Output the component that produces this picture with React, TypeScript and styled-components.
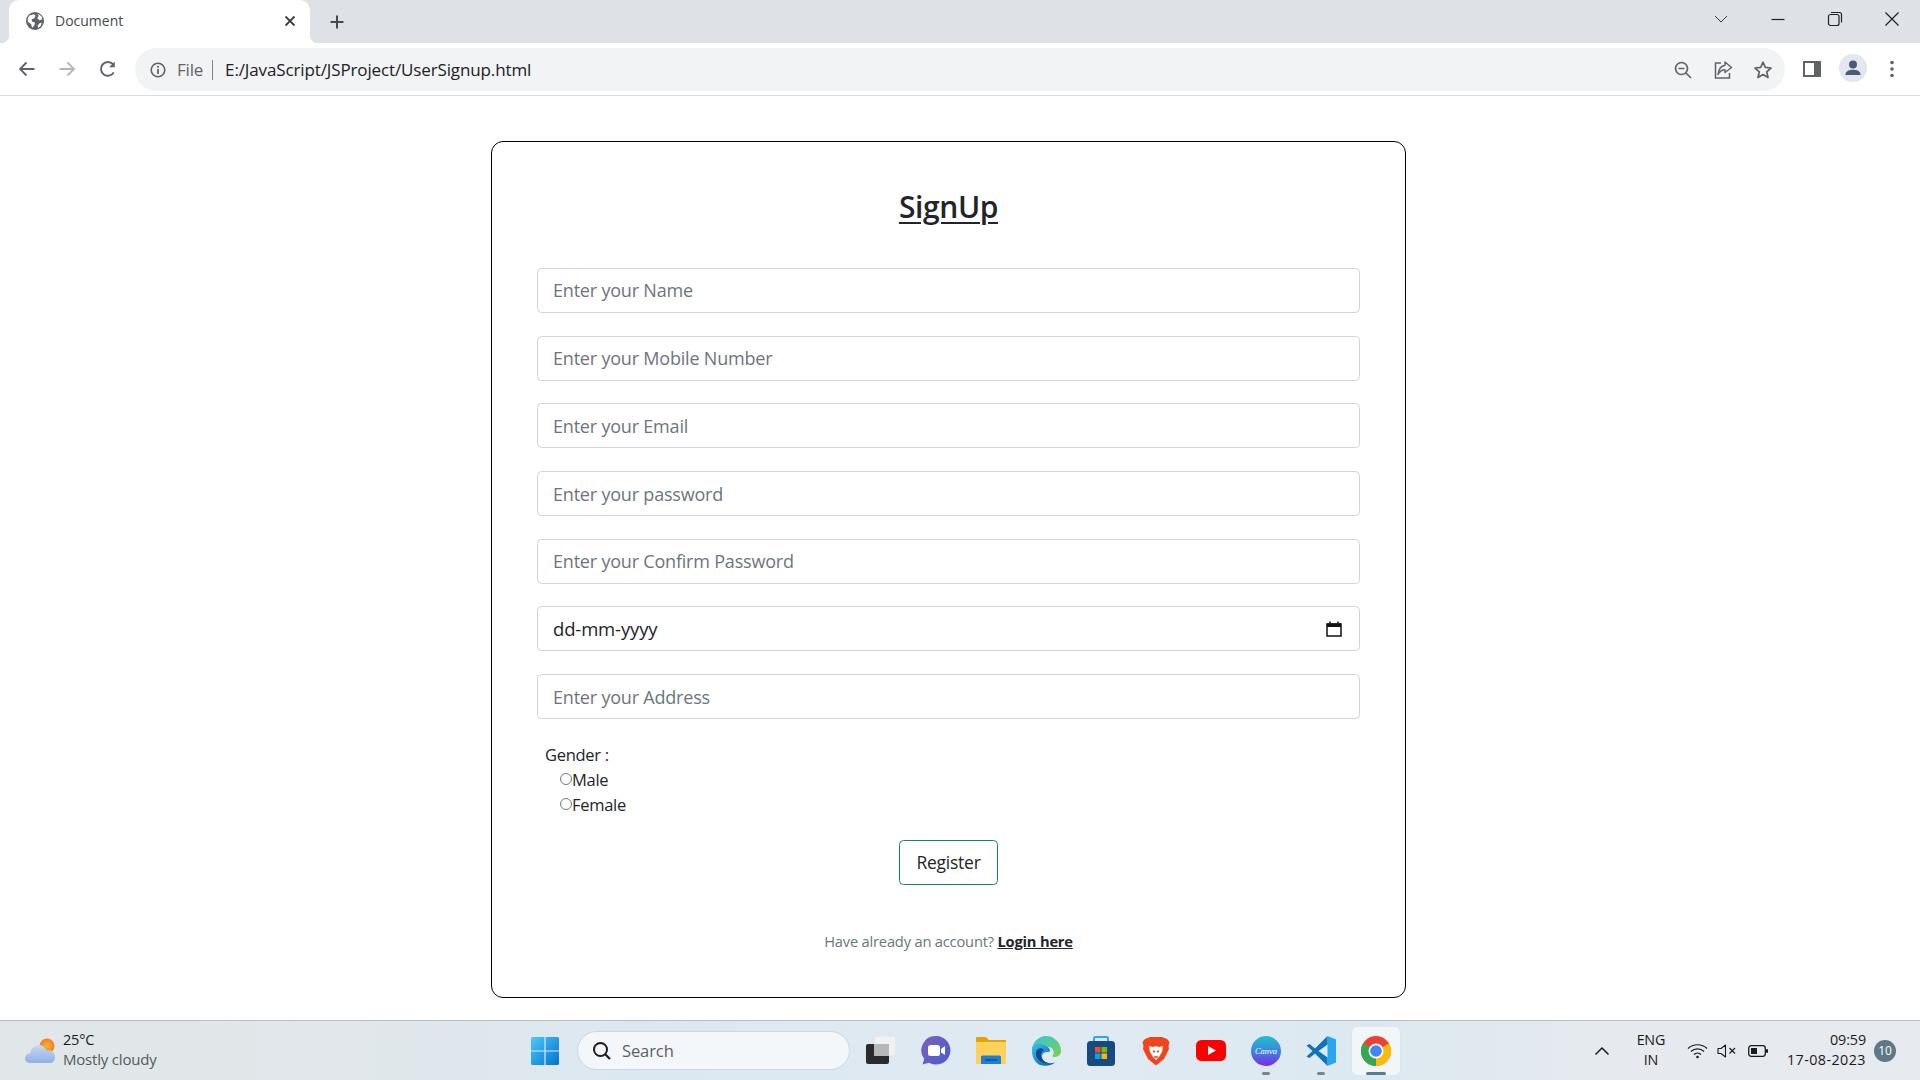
import React from "react";
import styled, { createGlobalStyle } from "styled-components";

const Global = createGlobalStyle`
  html, body { margin: 0; padding: 0; background: #fff; }
  * { box-sizing: border-box; }
  #root { width: 1920px; height: 1080px; overflow: hidden; }
  input::placeholder { color: #6c757d; opacity: 1; }
`;

const FONT = `"Open Sans", "Noto Sans", "Liberation Sans", sans-serif`;

const Screen = styled.div`
  width: 1920px; height: 1080px; display: flex; flex-direction: column;
  font-family: ${FONT}; color: #212529; background: #fff;
`;

/* ---------- browser chrome ---------- */
const TabStrip = styled.div`
  height: 43px; flex: none; background: #dee1e6; display: flex; align-items: flex-end; padding-left: 9px;
`;
const Tab = styled.div`
  position: relative; width: 301px; flex: none; height: 43px; background: #fff; border-radius: 10px 10px 0 0;
  display: flex; align-items: center; padding: 0 14px 2px 17px;
  &::before, &::after {
    content: ""; position: absolute; bottom: 0; width: 8px; height: 8px;
    background: radial-gradient(circle at 0 0, #dee1e6 8px, #fff 8.5px);
  }
  &::before { left: -8px; }
  &::after { right: -8px; background: radial-gradient(circle at 100% 0, #dee1e6 8px, #fff 8.5px); }
`;
const TabTitle = styled.span`
  font-size: 14px; color: #45494e; margin-left: 11px; flex: 1; letter-spacing: 0;
`;
const NewTab = styled.div`
  width: 16px; height: 16px; margin: 0 0 13px 19px; align-self: flex-end; display: flex;
`;
const Spacer = styled.div`flex: 1;`;
const WinControls = styled.div`
  display: flex; align-items: center; height: 43px; padding: 0 19px 6px 0;
`;
const WinButton = styled.div<{ $ml: number }>`
  width: 18px; height: 18px; margin-left: ${p => p.$ml}px; display: flex;
`;

const Toolbar = styled.div`
  height: 53px; flex: none; background: #fff; border-bottom: 1.5px solid #dadce0;
  display: flex; align-items: flex-start; padding: 5px 0 0 0;
`;
const NavIcon = styled.div<{ $ml: number }>`
  width: 20px; height: 20px; margin: 10.5px 0 0 ${p => p.$ml}px; display: flex; flex: none;
`;
const Omnibox = styled.div`
  width: 1650px; height: 43px; margin-left: 17px; flex: none; border-radius: 22px; background: #f1f3f4;
  display: flex; align-items: center; padding: 0 12px 0 13px;
`;
const FileLabel = styled.span`
  font-size: 17px; color: #5f6368; margin-left: 9px; padding-right: 9px; line-height: 20px;
  border-right: 1px solid #80868b; letter-spacing: -0.2px;
`;
const Url = styled.span`
  font-size: 17px; color: #202124; margin-left: 12px; flex: 1; letter-spacing: -0.13px;
`;
const OmniIcon = styled.div<{ $ml?: number }>`
  width: 20px; height: 20px; margin-left: ${p => p.$ml ?? 0}px; display: flex; flex: none;
`;
const Avatar = styled.div`
  width: 28px; height: 28px; margin: 6px 0 0 17px; border-radius: 50%; background: #e3e6ec;
  display: flex; align-items: center; justify-content: center; flex: none;
`;

/* ---------- page ---------- */
const Page = styled.div`
  flex: 1; display: flex; justify-content: center; padding: 45px 23px 0 0; background: #fff;
`;
const Card = styled.div`
  width: 915px; height: 856.5px; border: 1.3px solid #000; border-radius: 12px; padding: 47.500px 45px 0;
  display: flex; flex-direction: column;
`;
const Title = styled.h1`
  margin: 0; font-size: 30px; line-height: 34px; font-weight: 600; text-align: center;
  text-decoration: underline; text-underline-offset: 4px; text-decoration-thickness: 2px; color: #212529;
  letter-spacing: -0.4px;
`;
const Fields = styled.div`
  margin-top: 44.5px; display: flex; flex-direction: column; gap: 22.8px;
`;
const Input = styled.input`
  width: 100%; height: 44.9px; border: 1.2px solid #ced4da; border-radius: 4.5px; padding: 0 15px;
  font-family: ${FONT}; font-size: 18px; color: #212529; background: #fff; outline: none; letter-spacing: -0.2px;
`;
const DateBox = styled.div`
  width: 100%; height: 44.9px; border: 1.2px solid #ced4da; border-radius: 4.5px; padding: 0 17px 0 15px;
  display: flex; align-items: center; justify-content: space-between; font-size: 18.5px; color: #212529;
  letter-spacing: -0.15px;
`;
const GenderBlock = styled.div`
  margin: 23px 0 0 8px; display: flex; flex-direction: column;
`;
const GenderLabel = styled.div`
  font-size: 16.5px; line-height: 25px; letter-spacing: -0.3px;
`;
const RadioRow = styled.label`
  display: flex; align-items: center; margin-left: 15px; height: 25.3px; font-size: 16.5px; letter-spacing: -0.3px;
`;
const Radio = styled.span`
  width: 12px; height: 12px; border: 1.2px solid #767676; border-radius: 50%; flex: none; margin-top: -1px;
`;
const RegisterWrap = styled.div`
  display: flex; justify-content: center; margin-top: 22px;
`;
const RegisterButton = styled.button`
  width: 99px; height: 45px; border: 1.3px solid #198754; border-radius: 4.5px; background: #fff;
  font-family: ${FONT}; font-size: 17.5px; color: #212529; padding: 0; letter-spacing: -0.25px;
`;
const Footnote = styled.p`
  margin: 46px 0 0; text-align: center; font-size: 14.7px; line-height: 20px; color: #6c757d; letter-spacing: -0.2px;
`;
const LoginLink = styled.a`
  color: #212529; font-weight: 700; text-decoration: underline;
`;

/* ---------- taskbar ---------- */
const Taskbar = styled.div`
  height: 60px; flex: none; border-top: 1.3px solid #b9bec3; display: flex; align-items: center;
  background: linear-gradient(90deg, #e1e6e8 0%, #e1e7ea 18%, #dce8f1 33%, #dfeaf3 55%, #dde9f1 72%, #e6eaee 84%, #e7eaee 100%);
`;
const Weather = styled.div`
  width: 530px; flex: none; padding-left: 25px; display: flex; align-items: center;
`;
const WeatherText = styled.div`
  margin: -2px 0 0 7px; display: flex; flex-direction: column; font-size: 14.5px; line-height: 19.5px; letter-spacing: -0.2px;
`;
const Temp = styled.span`color: #1b1b1b;`;
const Cond = styled.span`color: #555a5e; font-size: 15px;`;
const Search = styled.div`
  width: 273px; height: 39px; margin: 0 16px 0 17px; flex: none; border-radius: 20px; background: #f3f7fa;
  border: 1px solid #cdd6de; display: flex; align-items: center; padding-left: 14px;
  font-size: 16.5px; color: #5b5f63;
`;
const SearchText = styled.span`margin-left: 10px; letter-spacing: -0.1px;`;
const AppSlot = styled.div<{ $active?: boolean; $dot?: boolean; $ml?: number }>`
  position: relative; width: 30px; height: 30px; flex: none; margin-left: ${p => p.$ml ?? 25}px; display: flex;
  ${p => p.$active && `
    &::before {
      content: ""; position: absolute; left: -9px; top: -9px; width: 48px; height: 48px;
      background: #f1f6f9; border-radius: 5px; box-shadow: 0 0 1px #ccd5db;
    }
    &::after {
      content: ""; position: absolute; left: 5px; top: 36px; width: 20px; height: 3px;
      border-radius: 2px; background: #5f7c8c;
    }
  `}
  ${p => p.$dot && `
    &::after {
      content: ""; position: absolute; left: 11px; top: 36px; width: 8px; height: 3px;
      border-radius: 2px; background: #7d8487;
    }
  `}
  svg { position: relative; z-index: 1; }
`;
const Tray = styled.div`
  margin-left: auto; display: flex; align-items: center; padding-right: 24px; color: #1b1b1b;
`;
const TrayIcon = styled.div<{ $ml: number }>`
  margin-left: ${p => p.$ml}px; display: flex; flex: none;
`;
const Lang = styled.div`
  margin: -2px 0 0 26px; width: 30px; text-align: center; font-size: 14.3px; line-height: 20px; letter-spacing: -0.2px;
`;
const Clock = styled.div`
  margin: -2px 0 0 19px; text-align: right; font-size: 14.3px; line-height: 20px; letter-spacing: -0.1px;
`;
const ClockDate = styled.div`
  letter-spacing: 0.45px;
`;
const Badge = styled.div`
  width: 22px; height: 22px; margin-left: 8px; border-radius: 50%; background: #5f7787; color: #fff;
  font-size: 12px; display: flex; align-items: center; justify-content: center;
`;

/* ---------- icons ---------- */
const I = "#5f6368";
const App: React.FC = () => (
  <Screen>
    <Global />
    <TabStrip>
      <Tab>
        <svg width="18" height="18" viewBox="0 0 16 16" style={{ flex: "none" }}>
          <circle cx="8" cy="8" r="8" fill="#5f6368" />
          <path d="M3 3.200 7 2 8.600 3.400 7.400 5.600 5 6.400 5.600 8.600 8 9.400 7.400 12 5.400 14 4.600 10.800 1.600 8.600 1.600 5.600Z M10.400 1.600 13.600 3.600 14.600 6.400 12 7.400 10 5.600 11.200 3.600Z M12 10 14 9.600 13 12.400 10.800 14.200 10.400 12Z" fill="#fff" />
        </svg>
        <TabTitle>Document</TabTitle>
        <svg width="12" height="12" viewBox="0 0 12 12" style={{ flex: "none" }}>
          <path d="M1.500 1.500 10.500 10.500M10.500 1.500 1.500 10.500" stroke="#3c4043" strokeWidth="1.800" />
        </svg>
      </Tab>
      <NewTab>
        <svg width="16" height="16" viewBox="0 0 16 16">
          <path d="M8 1.500V14.500M1.500 8H14.500" stroke="#45494e" strokeWidth="2" />
        </svg>
      </NewTab>
      <Spacer />
      <WinControls>
        <WinButton $ml={0}>
          <svg width="18" height="18" viewBox="0 0 18 18"><path d="M3 6 9 12 15 6" fill="none" stroke="#3c4043" strokeWidth="1" /></svg>
        </WinButton>
        <WinButton $ml={39}>
          <svg width="18" height="18" viewBox="0 0 18 18"><path d="M2.500 9.500H15.500" stroke="#202124" strokeWidth="1.200" /></svg>
        </WinButton>
        <WinButton $ml={39}>
          <svg width="18" height="18" viewBox="0 0 18 18">
            <rect x="2.500" y="4.500" width="10.500" height="11" rx="2" fill="none" stroke="#202124" strokeWidth="1.200" />
            <path d="M5 2.500H13.500Q15.500 2.500 15.500 4.500V12.500" fill="none" stroke="#202124" strokeWidth="1.200" />
          </svg>
        </WinButton>
        <WinButton $ml={39}>
          <svg width="18" height="18" viewBox="0 0 18 18"><path d="M2.500 2.500 15.500 15.500M15.500 2.500 2.500 15.500" stroke="#202124" strokeWidth="1.200" /></svg>
        </WinButton>
      </WinControls>
    </TabStrip>

    <Toolbar>
      <NavIcon $ml={17}>
        <svg width="20" height="20" viewBox="0 0 20 20"><path d="M17.500 10H3.500M9.500 3.500 3 10 9.500 16.500" fill="none" stroke={I} strokeWidth="1.800" /></svg>
      </NavIcon>
      <NavIcon $ml={20}>
        <svg width="20" height="20" viewBox="0 0 20 20"><path d="M2.500 10H16.500M10.500 3.500 17 10 10.500 16.500" fill="none" stroke="#b4b7ba" strokeWidth="1.800" /></svg>
      </NavIcon>
      <NavIcon $ml={21}>
        <svg width="20" height="20" viewBox="0 0 20 20">
          <path d="M15.800 13.500A6.900 6.900 0 1 1 15 5.200" fill="none" stroke={I} strokeWidth="1.900" />
          <path d="M16.800 2.500V8.300H11Z" fill={I} />
        </svg>
      </NavIcon>
      <Omnibox>
        <OmniIcon>
          <svg width="20" height="20" viewBox="0 0 20 20">
            <circle cx="10" cy="10" r="6.800" fill="none" stroke={I} strokeWidth="1.600" />
            <path d="M10 9V14M10 6V7.800" stroke={I} strokeWidth="1.800" />
          </svg>
        </OmniIcon>
        <FileLabel>File</FileLabel>
        <Url>E:/JavaScript/JSProject/UserSignup.html</Url>
        <OmniIcon>
          <svg width="20" height="20" viewBox="0 0 20 20">
            <circle cx="8.500" cy="8.500" r="6" fill="none" stroke={I} strokeWidth="1.700" />
            <path d="M5.500 8.500H11.500M13 13 18 18" stroke={I} strokeWidth="1.700" />
          </svg>
        </OmniIcon>
        <OmniIcon $ml={20}>
          <svg width="20" height="20" viewBox="0 0 20 20">
            <path d="M8 3H2.500V18H16.500V13" fill="none" stroke={I} strokeWidth="1.500" />
            <path d="M12 2 18.500 7.500 12 12.500V9.800C8.500 9.800 6.700 11.500 5 14.500 5.500 10 8 6 12 5.300Z" fill="none" stroke={I} strokeWidth="1.400" strokeLinejoin="round" />
          </svg>
        </OmniIcon>
        <OmniIcon $ml={20}>
          <svg width="20" height="20" viewBox="0 0 20 20">
            <path d="M10 2.200 12.300 7.400 18 8 13.700 11.800 15 17.500 10 14.500 5 17.500 6.300 11.800 2 8 7.700 7.400Z" fill="none" stroke={I} strokeWidth="1.700" strokeLinejoin="round" />
          </svg>
        </OmniIcon>
      </Omnibox>
      <NavIcon $ml={17}>
        <svg width="20" height="20" viewBox="0 0 20 20">
          <rect x="1" y="2" width="18" height="16" fill={I} />
          <rect x="3" y="4" width="9" height="12" fill="#fff" />
        </svg>
      </NavIcon>
      <Avatar>
        <svg width="20" height="20" viewBox="0 0 20 20">
          <circle cx="10" cy="6.500" r="4" fill="#4a5a78" />
          <path d="M2.500 16.500C2.500 13 6.500 11.800 10 11.800S17.500 13 17.500 16.500V17H2.500Z" fill="#4a5a78" />
        </svg>
      </Avatar>
      <NavIcon $ml={15}>
        <svg width="20" height="20" viewBox="0 0 20 20">
          <circle cx="10" cy="3.500" r="1.800" fill={I} /><circle cx="10" cy="10" r="1.800" fill={I} /><circle cx="10" cy="16.500" r="1.800" fill={I} />
        </svg>
      </NavIcon>
    </Toolbar>

    <Page>
      <Card>
        <Title>SignUp</Title>
        <Fields>
          <Input placeholder="Enter your Name" />
          <Input placeholder="Enter your Mobile Number" />
          <Input placeholder="Enter your Email" />
          <Input placeholder="Enter your password" />
          <Input placeholder="Enter your Confirm Password" />
          <DateBox>
            dd-mm-yyyy
            <svg width="16" height="16" viewBox="0 0 16 16">
              <path d="M1 3H15V15H1Z" fill="none" stroke="#111" strokeWidth="1.500" />
              <path d="M1 2.500H15V6H1Z" fill="#111" />
              <path d="M4 .5V3M12 .5V3" stroke="#111" strokeWidth="1.500" />
            </svg>
          </DateBox>
          <Input placeholder="Enter your Address" />
        </Fields>
        <GenderBlock>
          <GenderLabel>Gender :</GenderLabel>
          <RadioRow><Radio />Male</RadioRow>
          <RadioRow><Radio />Female</RadioRow>
        </GenderBlock>
        <RegisterWrap><RegisterButton>Register</RegisterButton></RegisterWrap>
        <Footnote>Have already an account? <LoginLink>Login here</LoginLink></Footnote>
      </Card>
    </Page>

    <Taskbar>
      <Weather>
        <svg width="31" height="26" viewBox="0 0 31 26">
          <defs>
            <radialGradient id="sun" cx="50%" cy="50%" r="55%"><stop offset="0" stopColor="#f9b233" /><stop offset="1" stopColor="#ee7d1b" /></radialGradient>
            <linearGradient id="cloud" x1="0" y1="0" x2="0" y2="1"><stop offset="0" stopColor="#c8d9f2" /><stop offset="1" stopColor="#8fb0e6" /></linearGradient>
          </defs>
          <circle cx="22" cy="8" r="7.500" fill="url(#sun)" />
          <path d="M5 25C1.500 25 0 22.500 0 20.500 0 17.500 2.500 15.500 5 15.500 6 10 10 7 14 7 18 7 20.500 9.500 21.500 12.500 26 11.500 30 14 30 19 30 23 27.500 25 25 25Z" fill="url(#cloud)" />
        </svg>
        <WeatherText><Temp>25°C</Temp><Cond>Mostly cloudy</Cond></WeatherText>
      </Weather>
      <svg width="30" height="30" viewBox="0 0 30 30" style={{ flex: "none" }}>
        <defs><linearGradient id="win" x1="0" y1="0" x2="1" y2="1"><stop offset="0" stopColor="#4fc8fb" /><stop offset="1" stopColor="#0072cf" /></linearGradient></defs>
        <path d="M1 2.500Q1 1 2.500 1H14.400V14.400H1ZM15.600 1H27.500Q29 1 29 2.500V14.400H15.600ZM1 15.600H14.400V29H2.500Q1 29 1 27.500ZM15.600 15.600H29V27.500Q29 29 27.500 29H15.600Z" fill="url(#win)" />
      </svg>
      <Search>
        <svg width="20" height="20" viewBox="0 0 20 20" style={{ flex: "none" }}>
          <circle cx="8.500" cy="8.500" r="6.500" fill="none" stroke="#1c1c1c" strokeWidth="2" />
          <path d="M13 13 18 18" stroke="#1c1c1c" strokeWidth="2.200" />
        </svg>
        <SearchText>Search</SearchText>
      </Search>
      <AppSlot $ml={0}>
        <svg width="30" height="30" viewBox="0 0 30 30">
          <rect x="8" y="0" width="22" height="20" rx="2" fill="#f0f1f2" stroke="#dfe2e4" />
          <rect x="0" y="8" width="23" height="20" rx="2" fill="#2b2b2b" />
          <rect x="8" y="8" width="15" height="12" fill="#b5b7b8" />
        </svg>
      </AppSlot>
      <AppSlot>
        <svg width="30" height="30" viewBox="0 0 30 30">
          <defs><linearGradient id="meet" x1="0" y1="0" x2="1" y2="1"><stop offset="0" stopColor="#7b62bd" /><stop offset="1" stopColor="#4a5bcf" /></linearGradient></defs>
          <path d="M15 0A14.300 14.300 0 1 1 8 26.700L1.500 28.500 3.300 23A14.300 14.300 0 0 1 15 0Z" fill="url(#meet)" />
          <rect x="7" y="9" width="12" height="11" rx="2.500" fill="#fff" />
          <path d="M20 13 24 10V19L20 16.500Z" fill="#fff" />
        </svg>
      </AppSlot>
      <AppSlot>
        <svg width="30" height="30" viewBox="0 0 30 30">
          <path d="M0 2Q0 1 1 1H10L13 4H30V10H0Z" fill="#e3a20c" />
          <path d="M0 6H30V27.500Q30 28 29 28H1Q0 28 0 27.500Z" fill="#fcd25a" />
          <path d="M5 28V21Q5 19.500 6.500 19.500H23.500Q25 19.500 25 21V28Z" fill="#1f7fd6" />
          <path d="M9 24H21" stroke="#0e4f9e" strokeWidth="1.500" />
        </svg>
      </AppSlot>
      <AppSlot>
        <svg width="30" height="30" viewBox="0 0 30 30">
          <defs>
            <linearGradient id="edge1" x1="0" y1="0" x2="1" y2="1"><stop offset="0" stopColor="#35c1f1" /><stop offset="1" stopColor="#0c59a4" /></linearGradient>
            <linearGradient id="edge2" x1="0" y1="0" x2="1" y2="1"><stop offset="0" stopColor="#36c4e0" /><stop offset="1" stopColor="#7ad04c" /></linearGradient>
          </defs>
          <path d="M15 0A15 15 0 0 1 30 15C30 20 25 22 21 20.500 24 17 23 12 18 11 12 10 7 11 4 9 3 12 3 13 1 15 1 7 7 0 15 0Z" fill="url(#edge2)" />
          <path d="M1 15C0 8 7 7 13 9 19 11 21 16 17 16 11 16 9 21 13 25 15 27 19 28 24 26.500 20 30 14 30.500 9 29 4 27 1 21 1 15Z" fill="url(#edge1)" />
          <path d="M13 14C9 16 8 24 17 27 11 28 4 23 5 16 6 12 11 11 13 14Z" fill="#114a8b" />
        </svg>
      </AppSlot>
      <AppSlot>
        <svg width="30" height="30" viewBox="0 0 30 30">
          <path d="M8 6V2.500Q8 1 9.500 1H20.500Q22 1 22 2.500V6" fill="none" stroke="#2ca5ec" strokeWidth="2" />
          <rect x="1" y="5" width="28" height="25" rx="3.500" fill="#174a80" />
          <rect x="9" y="11" width="5.500" height="5.500" fill="#f25022" />
          <rect x="15.500" y="11" width="5.500" height="5.500" fill="#7fba00" />
          <rect x="9" y="17.500" width="5.500" height="5.500" fill="#00a4ef" />
          <rect x="15.500" y="17.500" width="5.500" height="5.500" fill="#ffb900" />
        </svg>
      </AppSlot>
      <AppSlot>
        <svg width="30" height="30" viewBox="0 0 30 30">
          <path d="M4 3 9 1H21L26 3 28.500 6 27.500 10 28 13 23 23 15 29.500 7 23 2 13 2.500 10 1.500 6Z" fill="#f1441a" />
          <path d="M8 10 12 11 15 10 18 11 22 10 21 16 18 21 15 24 12 21 9 16Z" fill="#fff" />
          <path d="M12 15 14 16M18 15 16 16M13 21H17" stroke="#f1441a" strokeWidth="1.500" />
        </svg>
      </AppSlot>
      <AppSlot>
        <svg width="30" height="30" viewBox="0 0 30 30">
          <rect x="0" y="4" width="30" height="21" rx="5.500" fill="#ff0000" />
          <path d="M12 10 20 14.500 12 19Z" fill="#fff" />
        </svg>
      </AppSlot>
      <AppSlot $dot>
        <svg width="30" height="30" viewBox="0 0 30 30">
          <defs><linearGradient id="canva" x1="0" y1="0" x2="0" y2="1"><stop offset="0" stopColor="#1fc3c9" /><stop offset=".55" stopColor="#3f7ee0" /><stop offset="1" stopColor="#7d2ae8" /></linearGradient></defs>
          <circle cx="15" cy="15" r="15" fill="url(#canva)" />
          <text x="15" y="18" textAnchor="middle" fontSize="8.500" fontStyle="italic" fontFamily="Liberation Serif, serif" fill="#fff">Canva</text>
        </svg>
      </AppSlot>
      <AppSlot $dot>
        <svg width="30" height="30" viewBox="0 0 30 30">
          <path d="M21.500 0 30 3.500V26.500L21.500 30Z" fill="#2aa5f0" />
          <path d="M21.500 0 9 12.500 3.500 8 0.500 9.500 6.500 15 0.500 20.500 3.500 22 9 17.500 21.500 30V21.500L12.500 15 21.500 8.500Z" fill="#0f72bd" />
        </svg>
      </AppSlot>
      <AppSlot $active>
        <svg width="30" height="30" viewBox="0 0 30 30">
          <circle cx="15" cy="15" r="15" fill="#ea4335" />
          <path d="M15 15 28 7.500A15 15 0 0 1 15 30Z" fill="#fbbc04" />
          <path d="M15 15 15 30A15 15 0 0 1 2 7.500Z" fill="#34a853" />
          <circle cx="15" cy="15" r="7.500" fill="#fff" />
          <circle cx="15" cy="15" r="5.800" fill="#4285f4" />
        </svg>
      </AppSlot>
      <Tray>
        <TrayIcon $ml={0}>
          <svg width="16" height="10" viewBox="0 0 16 10"><path d="M1.500 8.500 8 2 14.500 8.500" fill="none" stroke="#1b1b1b" strokeWidth="1.500" /></svg>
        </TrayIcon>
        <Lang>ENG<br />IN</Lang>
        <TrayIcon $ml={21}>
          <svg width="21" height="16" viewBox="0 0 21 16">
            <path d="M1 5.500C6 .5 15 .5 20 5.500M4 8.500C7.500 5 13.500 5 17 8.500M7 11.500C9 9.500 12 9.500 14 11.500" fill="none" stroke="#1b1b1b" strokeWidth="1.200" />
            <circle cx="10.500" cy="14" r="1.300" fill="#1b1b1b" />
          </svg>
        </TrayIcon>
        <TrayIcon $ml={9}>
          <svg width="20" height="14" viewBox="0 0 20 14">
            <path d="M1 4.500H4L8.500 1V13L4 9.500H1Z" fill="none" stroke="#1b1b1b" strokeWidth="1.100" strokeLinejoin="round" />
            <path d="M12.500 4 18 9.500M18 4 12.500 9.500" stroke="#1b1b1b" strokeWidth="1.100" />
          </svg>
        </TrayIcon>
        <TrayIcon $ml={11}>
          <svg width="20" height="12" viewBox="0 0 20 12">
            <rect x="0.700" y="0.700" width="16.600" height="10.600" rx="2.500" fill="none" stroke="#1b1b1b" strokeWidth="1.300" />
            <rect x="3" y="3" width="6" height="6" fill="#1b1b1b" />
            <rect x="18" y="4" width="2" height="4" rx="1" fill="#1b1b1b" />
          </svg>
        </TrayIcon>
        <Clock>09:59<ClockDate>17-08-2023</ClockDate></Clock>
        <Badge>10</Badge>
      </Tray>
    </Taskbar>
  </Screen>
);

export default App;
